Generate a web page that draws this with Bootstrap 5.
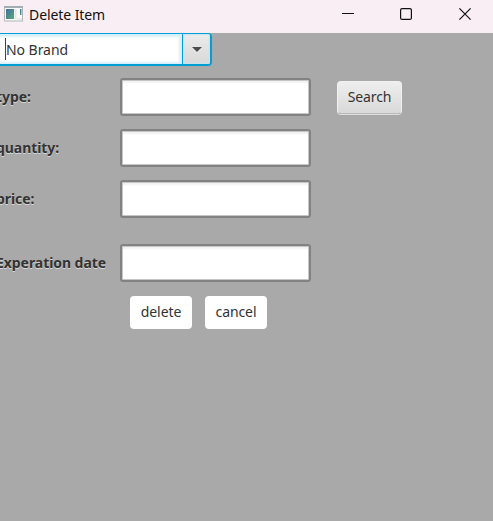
<!DOCTYPE html>
<html lang="en">
<head>
<meta charset="utf-8">
<meta name="viewport" content="width=device-width, initial-scale=1">
<title>Delete Item</title>
<link href="https://cdn.jsdelivr.net/npm/bootstrap@5.3.0/dist/css/bootstrap.min.css" rel="stylesheet">
<style>
body { height: 521px; background: #a9a9a9; font-family: "Noto Sans", "Open Sans", sans-serif; font-size: 14px; line-height: 20px; color: #333; }
.titlebar { height: 33px; background: #f9eef3; color: #111; padding-left: 4px; flex: none; }
.titlebar .app-icon { margin-top: -5px; }
.titlebar .caption { margin-left: 6px; letter-spacing: -.08px; margin-top: -4px; }
.win-btn { width: 58px; height: 28px; padding: 0; border: 0; background: none; display: flex; align-items: center; justify-content: center; }
.win-btn:last-child { padding-left: 2px; }
.combo { width: 216px; height: 33px; margin-left: -4px; border: 2px solid #039ed3; border-top-width: 1.5px; border-radius: 4px; overflow: hidden; flex: none; }
.combo input { width: 184px; border: 0; outline: 0; border-radius: 0; padding: 1px 0 0 8px; color: #333; font-size: 14px; letter-spacing: -.05px; box-shadow: inset -3px 0 2px #d8f0f8, inset 0 3px 2px #d8f0f8, inset 0 -2px 2px #d8f0f8; }
.combo .arrow { border: 0; border-left: 1px solid #039ed3; padding: 2px 0 0; background: linear-gradient(#ececec, #d8d8d8); box-shadow: inset 0 0 2px 1px #c5e4ef; }
.caret { width: 1px; height: 22px; background: #444; left: 5px; top: 38px; }
.entries { padding-top: 12px; }
.entry { height: 38px; margin-bottom: 13px; }
.entry-late { margin-top: 26px; }
.entry label { width: 124px; margin-left: -4px; font-weight: 700; letter-spacing: -.06px; white-space: nowrap; text-shadow: 0 1px 0 #d8d8d8; flex: none; }
.entry .field { width: 191px; height: 38px; padding: 2px 6px; border: 2px solid #828282; border-radius: 3px; box-shadow: inset 0 0 0 1px #c6c6c6, inset 0 3px 2px #f4f1f2; font-size: 14px; flex: none; }
.actions { gap: 13px; padding: 1px 0 0 130px; }
.plain-btn { width: 62px; height: 33px; padding: 0 0 1px; font-size: 14px; line-height: 20px; color: #333; background: #fff; border: 0; border-radius: 4px; letter-spacing: -.1px; }
.search-btn { width: 65px; height: 33px; margin-left: 26px; padding-bottom: 0; background: linear-gradient(#eee, #d9d9d9); border: 1px solid #f1f1f1; border-bottom-color: #bababa; box-shadow: 0 1px 0 #dedede; }
</style>
<script src="https://cdn.jsdelivr.net/npm/bootstrap@5.3.0/dist/js/bootstrap.bundle.min.js"></script>
</head>
<body class="d-flex flex-column overflow-hidden position-relative">
<header class="titlebar d-flex align-items-center">
  <svg class="app-icon" width="19" height="16" viewBox="0 0 19 16" aria-hidden="true">
    <defs><linearGradient id="g" x1="0" y1="0" x2="1" y2="1"><stop offset="0" stop-color="#416f9f"/><stop offset="1" stop-color="#58aa78"/></linearGradient></defs>
    <rect x=".5" y=".5" width="18" height="14.5" fill="#fafafa" stroke="#b1b6b9"/>
    <path d="M0 1h19" stroke="#a3adb2" stroke-width="2"/>
    <rect x="2" y="3" width="8" height="10" fill="url(#g)"/>
    <path d="M11.5 3v10" stroke="#e6e6e6" stroke-width="2"/>
    <path d="M13 13h5" stroke="#ddd"/>
    <rect x="16" y="3" width="1.5" height="6" fill="url(#g)"/>
  </svg>
  <span class="caption">Delete Item</span>
  <div class="d-flex ms-auto align-self-start">
    <button class="win-btn" aria-label="Minimize"><svg width="12" height="12"><path d="M0 5.5h12" stroke="#111"/></svg></button>
    <button class="win-btn" aria-label="Maximize"><svg width="12" height="12"><rect x=".6" y=".6" width="10.8" height="10.8" rx="1.5" fill="none" stroke="#111" stroke-width="1.2"/></svg></button>
    <button class="win-btn" aria-label="Close"><svg width="12" height="12"><path d="M.4.4l11.2 11.2M11.6.4L.4 11.6" stroke="#111" stroke-width="1.2"/></svg></button>
  </div>
</header>
<div class="combo d-flex">
  <input value="No Brand" aria-label="Brand">
  <button class="arrow flex-grow-1 d-flex align-items-center justify-content-center" aria-label="Open list"><svg width="10" height="6"><path d="M0 1h10L5 6z" fill="#eee"/><path d="M0 0h10L5 5z" fill="#4c4c4c"/></svg></button>
</div>
<span class="caret position-absolute"></span>
<form class="entries">
  <div class="entry d-flex align-items-center"><label for="type">type:</label><input id="type" class="form-control field"><button type="button" class="btn plain-btn search-btn">Search</button></div>
  <div class="entry d-flex align-items-center"><label for="quantity">quantity:</label><input id="quantity" class="form-control field"></div>
  <div class="entry d-flex align-items-center"><label for="price">price:</label><input id="price" class="form-control field"></div>
  <div class="entry entry-late d-flex align-items-center"><label for="date">Experation date</label><input id="date" class="form-control field"></div>
  <div class="actions d-flex"><button type="button" class="btn plain-btn">delete</button><button type="button" class="btn plain-btn">cancel</button></div>
</form>
</body>
</html>
